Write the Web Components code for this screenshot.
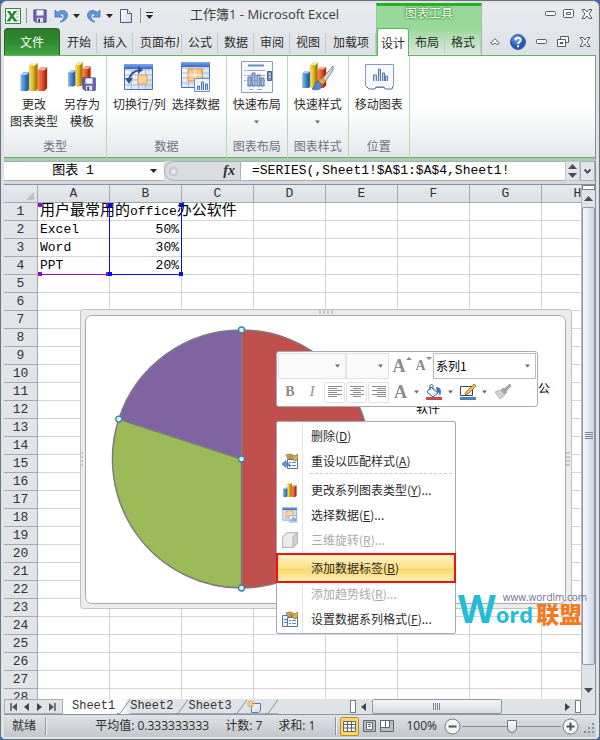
<!DOCTYPE html>
<html lang="zh-CN">
<head>
<meta charset="utf-8">
<title>工作簿1 - Microsoft Excel</title>
<style>
  html, body { height: 100%; margin: 0; }
  body {
    background: #3d6ba5;
    color: #2b2b2b;
    font: 12px/16px "Noto Sans CJK SC", sans-serif;
    --mono: "Liberation Mono", "Noto Sans CJK SC", monospace;
    --edge: #8a9099;
  }
</style>
</head>
<body>
<excel-window>
  <window-header slot="header"></window-header>
  <excel-ribbon slot="ribbon">
    <ribbon-group label="类型">
      <ribbon-button icon="bars">更改<br>图表类型</ribbon-button>
      <ribbon-button icon="barsSave">另存为<br>模板</ribbon-button>
    </ribbon-group>
    <ribbon-group label="数据">
      <ribbon-button icon="swap">切换行/列</ribbon-button>
      <ribbon-button icon="selectData">选择数据</ribbon-button>
    </ribbon-group>
    <ribbon-group label="图表布局">
      <ribbon-button icon="layout" drop>快速布局</ribbon-button>
    </ribbon-group>
    <ribbon-group label="图表样式">
      <ribbon-button icon="styles" drop>快速样式</ribbon-button>
    </ribbon-group>
    <ribbon-group label="位置">
      <ribbon-button icon="moveChart">移动图表</ribbon-button>
    </ribbon-group>
  </excel-ribbon>
  <formula-bar slot="formula"></formula-bar>
  <work-area slot="work">
    <sheet-grid></sheet-grid>
    <pie-chart></pie-chart>
    <mini-toolbar></mini-toolbar>
    <context-menu>
      <menu-item key="D">删除</menu-item>
      <menu-item key="A" icon="reset">重设以匹配样式</menu-item>
      <menu-line dashed></menu-line>
      <menu-item key="Y" icon="bars" more>更改系列图表类型</menu-item>
      <menu-item key="E" icon="selectData" more>选择数据</menu-item>
      <menu-item key="R" icon="cube" more off>三维旋转</menu-item>
      <menu-line></menu-line>
      <menu-item key="B" hot>添加数据标签</menu-item>
      <menu-item key="R" more off>添加趋势线</menu-item>
      <menu-item key="F" icon="format" more>设置数据系列格式</menu-item>
    </context-menu>
    <site-mark slot="over"></site-mark>
  </work-area>
  <sheet-tabs slot="tabs"></sheet-tabs>
  <status-bar slot="status"></status-bar>
</excel-window>

<script>
const grads = `
<defs>
 <linearGradient id="b" x2="1"><stop stop-color="#7fb6e8"/><stop offset="1" stop-color="#2a6cb4"/></linearGradient>
 <linearGradient id="y" x2="1"><stop stop-color="#ffe36a"/><stop offset="1" stop-color="#c99a06"/></linearGradient>
 <linearGradient id="r" x2="1"><stop stop-color="#ff8a5c"/><stop offset="1" stop-color="#cf3a16"/></linearGradient>
 <linearGradient id="h" x2="0" y2="1"><stop stop-color="#7fa8ea"/><stop offset="1" stop-color="#3567c4"/></linearGradient>
 <linearGradient id="p" x2="1" y2="1"><stop stop-color="#fff"/><stop offset="1" stop-color="#ccd9ea"/></linearGradient>
 <radialGradient id="q" cx=".4" cy=".3"><stop stop-color="#79a6ea"/><stop offset="1" stop-color="#2458b4"/></radialGradient>
</defs>`;
const bars = `
 <path d="M2 15l3-3h6v18l-2 2H2z" fill="#2565ab"/><path d="M2 15h6v17H2z" fill="url(#b)"/><path d="M2 15l3-3h6l-3 3z" fill="#a8d2f3"/>
 <path d="M20 10l3-3h7v22l-3 3h-7z" fill="#a82a10"/><path d="M20 10h7v22h-7z" fill="url(#r)"/><path d="M20 10l3-3h7l-3 3z" fill="#ffb08c"/>
 <path d="M11 5l3-3h6v27l-2 3h-7z" fill="#a87f04"/><path d="M11 5h6v27h-6z" fill="url(#y)"/><path d="M11 5l3-3h6l-3 3z" fill="#fff0a0"/>`;
const floppy = `<path d="M1 1h14v14H3l-2-2z" fill="#6c62b4" stroke="#4a4290"/><path d="M4 1.500h8v6H4z" fill="#f2f4fb"/><path d="M4.500 10h7v5h-7z" fill="#e6e6f2"/><path d="M6 11h2v4H6z" fill="#38357a"/>`;
const grid = `<path d="M1.500 3.500h28v25h-28z" fill="url(#p)" stroke="#4a70b4"/><path d="M2 9h27M2 14h27M2 19h27M2 24h27M8.500 9v19M15.500 9v19M22.500 9v19" stroke="#a3bbdc" fill="none"/><path d="M1 3h29v5H1z" fill="url(#h)"/>`;
const miniChart = `<path d="M.5.5h15v13H.5z" fill="#eef4fc" stroke="#6e8fc0"/><path d="M3.500 12V8h2v4M7.500 12V4h2v8M11.500 12V6h2v6" fill="#b9cdea" stroke="#4c74ae"/>`;
const hand = `<path d="M5.500 6.500h10v9h-10z" fill="#f6f9fd" stroke="#5b7396"/><path d="M7 9.500h2M7 12.500h2M10 9.500h4M10 12.500h4" stroke="#5a88c8"/><path d="M4 2l4-1 5 2 3-2v5l-3 2-4-3-3 1z" fill="#d9b254" stroke="#806020" stroke-width=".7"/><path d="M6 3l4 2m-2-3l4 3" stroke="#8c6a22" stroke-width=".7"/>`;
const ICONS = {
 bars: [32, 34, bars],
 barsSave: [32, 34, `<g transform="scale(.84)">${bars}</g><g transform="translate(16 17) scale(.94)">${floppy}</g>`],
 swap: [32, 32, grid + `<path d="M15 14h9v9h-9z" fill="#fbd29a" stroke="#e79a4a"/><path d="M6 19c1-6 4-9 11-10" fill="none" stroke="#2c5592" stroke-width="2"/><path d="M15 5l5 4-5 4zM2 17h8l-4 6z" fill="#2c5592"/>`],
 selectData: [32, 32, `<g transform="translate(0 -2)">${grid}<path d="M8 10h14v12H8z" fill="#fbc98a" stroke="#e88b3a"/><path d="M8 16h14M15 10v12" stroke="#fff"/></g><g transform="translate(14 17)">${miniChart}</g>`],
 layout: [32, 32, `<path d="M.5.5h31v31H.5z" fill="#f7f9fc" stroke="#8b9cb8"/><path d="M7 4.500h16" stroke="#6f8fc8" stroke-width="2"/><path d="M6 9.500h18M6 14.500h18M6 19.500h18M6 24.500h18M3 9.500h2M3 14.500h2M3 19.500h2M8 28.500h4M16 28.500h5" stroke="#9aaac6"/><path d="M7 16h3v9H7zM11 12h3v13h-3zM16 14h3v11h-3zM20 17h3v8h-3z" fill="#a8bde0" stroke="#5774a8"/><path d="M26.500 10.500h4v9h-4z" fill="#7e90b2" stroke="#4c5f86"/><path d="M28 13h2M28 16h2" stroke="#fff"/>`],
 styles: [32, 32, `<g transform="translate(-1 0) scale(.84)">${bars}</g><path d="M31 5L20 18l3 3 8-12z" fill="#d8d8d8" stroke="#6f6f6f" stroke-width=".8"/><path d="M20 17l-4 3 4 4 4-4z" fill="#e7a34a" stroke="#9a6a26" stroke-width=".6"/><path d="M16 20c-4 1-2 5-6 8 5 2 10 0 10-4z" fill="#5784c9" stroke="#2f5594" stroke-width=".7"/>`],
 moveChart: [32, 32, `<path d="M2.500 3.500h28v21l-2 2H4l-1.500-2z" fill="#f6f9fd" stroke="#8b9cb8"/><path d="M3 25l3 3h6l1-2h8l1 2h7l1-3" fill="#f6f9fd" stroke="#5a6e94"/><path d="M10.500 20v-6h3v6M15.500 20V8h2v12M19.500 20v-8h2v8M22.500 20v-5h2v5" fill="#c7d5ec" stroke="#5a79ae"/>`],
 save: [16, 16, floppy],
 excel: [16, 16, `<path d="M.5.5h15v15H.5z" fill="#f6fbf5" stroke="#2f8a3c"/><path d="M11 3h3M11 6h3M11 9h3M11 12h3" stroke="#8cc58f"/><path d="M2 3h3l2 3 2-3h3L8.500 8l4 5.500h-3.500L7 10l-2 3.500H1.500L5.300 8z" fill="#268535"/>`],
 undo: [14, 14, `<path d="M1 1v7h7L5.500 5.500C8 4 10.500 5 10 8c-.3 2-2 4-4 5 4-.5 7.500-3 7.500-7C13.500 1.500 8 0 3.500 3.500z" fill="#5e9bdd" stroke="#2f66b0" stroke-width=".7"/>`],
 redo: [14, 14, `<path d="M13 1v7H6l2.500-2.500C6 4 3.500 5 4 8c.3 2 2 4 4 5C4 12.500.5 10 .5 6 .5 1.500 6 0 10.500 3.500z" fill="#5e9bdd" stroke="#2f66b0" stroke-width=".7"/>`],
 page: [12, 14, `<path d="M.5.5h7l4 4v9H.5z" fill="url(#p)" stroke="#4a5f86"/><path d="M7.500.5v4h4" fill="#fff" stroke="#4a5f86"/>`],
 down: [7, 4, `<path d="M0 0h7L3.500 4z" fill="#222"/>`],
 downGrey: [7, 4, `<path d="M0 0h7L3.500 4z" fill="#666"/>`],
 qat: [7, 7, `<path d="M0 .5h7" stroke="#222"/><path d="M0 3h7L3.500 7z" fill="#222"/>`],
 min: [11, 5, `<rect x=".5" y=".5" width="10" height="4" rx="1" fill="#fff" stroke="#555c66"/>`],
 max: [11, 9, `<rect x=".5" y=".5" width="10" height="8" rx="1" fill="#fff" stroke="#555c66"/><path d="M3.500 3.500h4v2h-4z" fill="none" stroke="#555c66"/>`],
 restore: [12, 11, `<path d="M3.500.5h8v6h-8z" fill="#fff" stroke="#555c66"/><path d="M.5 3.500h8v7h-8z" fill="#fff" stroke="#555c66"/><path d="M3 6.500h3v1H3z" fill="none" stroke="#555c66"/>`],
 close: [12, 10, `<path d="M1 .5h3l2 2.500 2-2.500h3L8 5l3 4.500H8L6 7 4 9.500H1L4 5z" fill="#fff" stroke="#555c66"/>`],
 collapse: [10, 7, `<path d="M5 .7L9.300 5 8 6.300H6.500L5 5 3.500 6.300H2L.7 5z" fill="#fff" stroke="#555c66"/>`],
 help: [16, 16, `<circle cx="8" cy="8" r="7.500" fill="url(#q)" stroke="#3a62a8"/><path d="M5.500 6.300C5.500 3 10.600 3 10.600 6c0 2-2.500 2-2.500 4" fill="none" stroke="#fff" stroke-width="1.900"/><path d="M7.100 11.300h2v2h-2z" fill="#fff"/>`],
 reset: [16, 16, hand + `<path d="M0 11l4-3.500V10c3 0 4 1 4 4-1-1.500-2-2-4-2v2.500z" fill="#5c96e0" stroke="#2f5fae" stroke-width=".6"/>`],
 format: [16, 16, `<path d="M.5 4.500h9v11h-9z" fill="#e9f0fa" stroke="#5b7396"/><path d="M2 8.500h3M2 11.500h3" stroke="#5a88c8"/>` + hand],
 cube: [14, 14, `<path d="M.5 4.500l4-4h9v9l-4 4h-9z" fill="#ececec" stroke="#bcbcbc"/><path d="M9.500 4.500l4-4v9l-4 4z" fill="#cfcfcf" stroke="#bcbcbc"/>`],
 bucket: [16, 14, `<path d="M5 3l7 6-5 4-6-5z" fill="#f4f8ff" stroke="#33558e"/><path d="M4 6V2c0-2 3-2 3 0v3" fill="none" stroke="#33558e"/><path d="M10 3c5 0 6 4 4 9-1-3-1-4-3-4z" fill="#3f6fbd"/>`],
 pen: [16, 14, `<path d="M.5 2.500h12v9H.5z" fill="#fff" stroke="#444"/><path d="M14 0l2 2-8 8-3 1 1-3z" fill="#f2b84b" stroke="#805a1a" stroke-width=".7"/>`],
 brush: [16, 16, `<path d="M15 0l1 2-5 5-2-2zM8 4l4 4-2 2-4-4z" fill="#a8a8a8" stroke="#8b8b8b" stroke-width=".6"/><path d="M5 6l5 5-5 4L0 8z" fill="#d2d2d2" stroke="#9a9a9a" stroke-width=".6"/>`],
 left: [14, 12, `<path d="M0 .5h14M0 2.500h9M0 4.500h14M0 6.500h9M0 8.500h14M0 10.500h9" stroke="#8c8c8c"/>`],
 center: [14, 12, `<path d="M0 .5h14M3 2.500h8M0 4.500h14M3 6.500h8M0 8.500h14M3 10.500h8" stroke="#8c8c8c"/>`],
 right: [14, 12, `<path d="M0 .5h14M5 2.500h9M0 4.500h14M5 6.500h9M0 8.500h14M5 10.500h9" stroke="#8c8c8c"/>`],
 first: [7, 8, `<path d="M1 0v8" stroke="#555" stroke-width="1.500"/><path d="M7 0v8L2 4z" fill="#555"/>`],
 prev: [5, 8, `<path d="M5 0v8L0 4z" fill="#444"/>`],
 next: [5, 8, `<path d="M0 0v8l5-4z" fill="#444"/>`],
 last: [7, 8, `<path d="M6 0v8" stroke="#555" stroke-width="1.500"/><path d="M0 0v8l5-4z" fill="#555"/>`],
 up: [9, 5, `<path d="M0 5h9L4.500 0z" fill="#484c52"/>`],
 dn: [9, 5, `<path d="M0 0h9L4.500 5z" fill="#484c52"/>`],
 chevron: [7, 5, `<path d="M.5.5l3 3 3-3" fill="none" stroke="#484c52" stroke-width="2"/>`],
 slash: [13, 15, `<path d="M0 14.500h3L13 .5" fill="none" stroke="#8a9099"/>`],
 newSheet: [15, 13, `<path d="M4.500 3.500h9v7l-2 2h-7z" fill="url(#p)" stroke="#5b79ad"/><path d="M4 0v8M0 4h8M1 1l6 6M7 1L1 7" stroke="#f0a020"/><circle cx="4" cy="4" r="1.500" fill="#ffe08a"/>`],
 vNormal: [13, 11, `<path d="M.5.5h12v10H.5zM.5 3.500h12M.5 7h12M4.500 .5v10M8.500 .5v10" fill="#fff" stroke="#5f6670"/>`],
 vLayout: [13, 12, `<path d="M.5.5h12v11H.5z" fill="#b9bec6" stroke="#5f6670"/><path d="M3.500 2.500h6v7h-6z" fill="#fff" stroke="#5f6670"/><path d="M5 4.500h3M5 6.500h3" stroke="#5f6670"/>`],
 vBreak: [14, 12, `<path d="M.5.5h13v11H.5z" fill="#b9bec6" stroke="#5f6670"/><path d="M1 1h8v6H1z" fill="#fff"/><path d="M5.500 0v7M9.500 0v7M1 7.500h9" stroke="#5f6670"/>`],
 minus: [17, 17, `<circle cx="8.500" cy="8.500" r="7.500" fill="#f4f5f7" stroke="#70757d"/><path d="M4.500 8.500h8" stroke="#4d525a" stroke-width="2"/>`],
 plus: [17, 17, `<circle cx="8.500" cy="8.500" r="7.500" fill="#f4f5f7" stroke="#70757d"/><path d="M4.500 8.500h8M8.500 4.500v8" stroke="#4d525a" stroke-width="2"/>`],
 grip: [11, 11, `<path d="M8 0h2v2H8zM4 4h2v2H4zM8 4h2v2H8zM0 8h2v2H0zM4 8h2v2H4zM8 8h2v2H8z" fill="#8b9098"/>`],
};

const reset = `
  :host, *, *::before, *::after { box-sizing: border-box; }
  button { font: inherit; color: inherit; background: none; border: 0; padding: 0; margin: 0; white-space: nowrap; }
  input, select { font: inherit; color: inherit; border: 0; margin: 0; padding: 0; background: none; outline: 0; border-radius: 0; }`;
function element(name, css, html) {
  customElements.define(name, class extends HTMLElement {
    constructor() {
      super();
      const root = this.attachShadow({ mode: 'open' });
      const body = typeof html === 'function' ? html(this) : html;
      root.innerHTML = `<style>${reset}${css}</style>${body}`;
    }
  });
}
const icon = (name, w, h) => `<x-icon name="${name}"${w ? ` w="${w}" h="${h}"` : ''}></x-icon>`;
const btn = (name, label, cls = '', w, h) => `<button class="${cls}" aria-label="${label}">${icon(name, w, h)}</button>`;

element('x-icon', `:host { display: inline-flex; flex: none; } svg { display: block; }`, el => {
  const [w, h, art] = ICONS[el.getAttribute('name')];
  return `<svg width="${el.getAttribute('w') || w}" height="${el.getAttribute('h') || h}" viewBox="0 0 ${w} ${h}" aria-hidden="true">${art.includes('url(') ? grads : ''}${art}</svg>`;
});

element('excel-window', `
  :host { display: flex; flex-direction: column; height: 100vh; padding: 2px 3px 2px 3px;
    border: 1px solid #6c727c; border-radius: 7px 7px 5px 5px; background: #dfe3e8; overflow: hidden; }
  slot[name=work]::slotted(*) { flex: 1; min-height: 0; }`,
  `<slot name="header"></slot><slot name="ribbon"></slot><slot name="formula"></slot><slot name="work"></slot><slot name="tabs"></slot><slot name="status"></slot>`);

element('window-header', `
  :host { display: grid; grid-template-columns: auto auto 1fr; grid-template-rows: 25px 27px; flex: none;
    background: linear-gradient(#e9ebee, #dde1e6); border-bottom: 1px solid #5cb85c; }
  .quick { display: flex; align-items: center; padding-left: 1px; }
  .quick button { display: flex; }
  .quick .near { margin-left: 5px; }
  .quick .far { margin-left: 7px; }
  .bar { width: 1px; height: 15px; background: #8a9099; margin: 0 6px 0 5px; }
  .bar.end { margin: 0 5px 0 8px; }
  .title { flex: 1; text-align: center; font: 13px/16px "Open Sans", "Noto Sans CJK SC", sans-serif; color: #3a3a3a; padding: 0 0 3px; }
  .tool { text-align: center; color: #fff; border-top: 3px solid #27ad27; border-left: 1px solid #8ccf8c; border-right: 1px solid #8ccf8c;
    background: #98d898; line-height: 13px; text-shadow: 0 0 2px #1c7a1c, 0 0 2px #1c7a1c; }
  .win, .doc { display: flex; align-items: center; justify-content: flex-end; gap: 7px; padding: 0 3px 4px 0; }
  .doc { gap: 10px; padding: 0 5px 0 0; }
  .win button, .doc button { display: flex; }
  .tabs { display: flex; align-items: stretch; }
  .tabs button { width: 36px; position: relative; overflow: hidden; }
  .tabs button::after { content: ""; position: absolute; right: 0; top: 5px; bottom: 2px; width: 1px; background: #c3c8ce; }
  .tabs .file { width: 56px; margin-right: 1px; color: #fff; border-radius: 4px 4px 0 0; border: 1px solid #1f6b22; border-bottom: 0;
    background: linear-gradient(#2c7a2c, #2f8a30 50%, #45a846); }
  .tabs .file::after, .context .on::after { display: none; }
  .tabs .cut { width: 49px; padding-left: 7px; text-align: left; }
  .tabs .cut span { display: block; width: 39px; overflow: hidden; }
  .tabs .wide { width: 50px; }
  .context { border-left: 1px solid #8ccf8c; border-right: 1px solid #8ccf8c; background: linear-gradient(#98d898, #dfe8e2); }
  .context .on { width: 32px; background: #fff; border: 1px solid #5cb85c; border-bottom: 0; border-radius: 3px 3px 0 0; margin-bottom: -1px; }`,
  `<div class="quick">${btn('excel', 'Excel')}<span class="bar"></span>${btn('save', '保存', '', 14, 14)}
     ${btn('undo', '撤消', 'far')}${btn('down', '撤消列表', 'near')}${btn('redo', '恢复', 'far')}${btn('down', '恢复列表', 'near')}
     ${btn('page', '新建', 'far')}<span class="bar end"></span>${btn('qat', '自定义快速访问工具栏')}
     <span class="title">工作簿1 - Microsoft Excel</span></div>
   <div class="tool">图表工具</div>
   <div class="win">${btn('min', '最小化')}${btn('max', '最大化')}${btn('close', '关闭')}</div>
   <div class="tabs"><button class="file">文件</button><button>开始</button><button>插入</button><button class="cut"><span>页面布局</span></button><button>公式</button><button>数据</button><button>审阅</button><button>视图</button><button class="wide">加载项</button></div>
   <div class="tabs context"><button class="on">设计</button><button>布局</button><button>格式</button></div>
   <div class="doc">${btn('collapse', '功能区最小化')}${btn('help', '帮助')}${btn('min', '最小化工作簿')}${btn('restore', '还原工作簿')}${btn('close', '关闭工作簿')}</div>`);

element('excel-ribbon', `
  :host { display: flex; flex: none; height: 105px; background: linear-gradient(#fff 50%, #e4e7eb);
    border-right: 1px solid var(--edge); border-bottom: 3px solid #a5cfa8; box-shadow: inset 0 -1px #6fa574; }`,
  `<slot></slot>`);
element('ribbon-group', `
  :host { display: flex; flex-direction: column; border-right: 1px solid #b4d9b6; padding: 0 3px; }
  .row { display: flex; flex: 1; justify-content: center; }
  .label { color: #6c7380; text-align: center; height: 20px; line-height: 16px; }`,
  el => `<div class="row"><slot></slot></div><div class="label">${el.getAttribute('label')}</div>`);
element('ribbon-button', `
  :host { display: flex; }
  button { display: flex; flex-direction: column; align-items: center; padding: 5px 3px 0; line-height: 17px; }
  x-icon { margin-bottom: 1px; height: 33px; }
  .d { height: 4px; margin: 8px 0 0; }`,
  el => `<button>${icon(el.getAttribute('icon'), 32, 32)}<span><slot></slot></span>${el.hasAttribute('drop') ? '<x-icon class="d" name="downGrey" w="5" h="4"></x-icon>' : ''}</button>`);

element('formula-bar', `
  :host { display: flex; flex: none; height: 24px; padding: 0 0 3px; background: #d6dae0; border-bottom: 1px solid var(--edge); border-right: 1px solid var(--edge); }
  button { display: flex; align-items: center; justify-content: center; }
  .name { display: flex; width: 160px; background: #fff; border: 1px solid #a9afb7; border-width: 1px 0; }
  .name input { flex: 1; min-width: 0; text-align: center; font: 13px/18px var(--mono); color: #000; }
  .name button { width: 22px; }
  .fx { display: flex; justify-content: space-between; align-items: center; width: 77px; padding: 0 5px 0 4px; background: #d9dde2;
    border: 1px solid #a9afb7; border-radius: 10px 0 0 10px; font: italic bold 14px/16px "Liberation Serif", serif; }
  .fx i { width: 9px; height: 9px; border-radius: 50%; background: radial-gradient(#f4f5f6, #a4aab2); }
  .formula { flex: 1; min-width: 0; background: #fff; border: 1px solid #a9afb7; border-width: 1px 0; padding-left: 11px; font: 13px/18px var(--mono); color: #000; }
  .spin { flex-direction: column; gap: 4px; width: 15px; border: 1px solid #c3c8ce; background: #e2e5ea; }
  .more { width: 15px; background: #e2e5ea; border: 1px solid #a9afb7; }`,
  `<div class="name"><input aria-label="名称框" value="图表 1"><button aria-label="名称列表">${icon('down')}</button></div>
   <div class="fx"><i></i><button aria-label="插入函数">fx</button></div>
   <input class="formula" aria-label="编辑栏" value="=SERIES(,Sheet1!$A$1:$A$4,Sheet1!">
   <button class="spin" aria-label="滚动编辑栏">${icon('up')}${icon('dn')}</button><button class="more" aria-label="展开编辑栏">${icon('chevron')}</button>`);

element('work-area', `
  :host { position: relative; display: flex; border-right: 1px solid var(--edge); background: #dfe3e8; }
  .sheet { position: relative; flex: 1; min-width: 0; overflow: hidden; background: #fff; }
  .scroll { display: flex; flex-direction: column; align-items: center; width: 14px; background: #dfe3e8; border-left: 1px solid #b5bac1; padding-bottom: 6px; gap: 6px; }
  .scroll button { display: flex; }
  .split { width: 13px; height: 5px; border: 1px solid #777d86; background: #fff; }
  .thumb { flex: 1; width: 13px; margin-bottom: 17px; border: 1px solid #8f98a5; border-radius: 2px; background: linear-gradient(90deg, #f4f6fb, #dfe4f0 60%, #ccd3e2);
    display: flex; align-items: center; justify-content: center; }
  .thumb i { width: 8px; height: 8px; background: repeating-linear-gradient(#7d8591 0 1px, transparent 1px 2px); }`,
  `<div class="sheet"><slot></slot></div>
   <div class="scroll"><span class="split"></span><button aria-label="向上滚动">${icon('up')}</button><div class="thumb"><i></i></div><button aria-label="向下滚动">${icon('dn')}</button></div>
   <slot name="over"></slot>`);

const cells = { 2: ['Excel', '50%'], 3: ['Word', '30%'], 4: ['PPT', '20%'] };
let rows = '';
for (let r = 1; r <= 28; r++) {
  const c = cells[r] || ['', ''];
  const a = r === 1 ? '<span class="cn">用户最常用的</span>office<span class="cn">办公软件</span>' : c[0];
  rows += `<tr><th scope="row">${r}</th><td>${a}</td><td class="n">${c[1]}</td>${'<td></td>'.repeat(6)}</tr>`;
}
element('sheet-grid', `
  :host { display: block; font: 13px/17px var(--mono); color: #000; }
  table { table-layout: fixed; width: 610px; border-spacing: 0; }
  th, td { height: 18px; padding: 0; border-right: 1px solid #d2d4d7; border-bottom: 1px solid #d2d4d7; white-space: nowrap; overflow: visible; }
  td { padding: 0 2px; }
  th { font-weight: normal; background: #e1e5ea; color: #333; border-color: #a3a9b1; }
  thead th { background: linear-gradient(#e6e9ed, #dce0e5); }
  .n { text-align: right; }
  .cn { font-size: 15px; line-height: 17px; vertical-align: top; }
  .corner { text-align: right; }
  .corner i { display: block; width: 8px; margin: 4px 3px 0 auto; border: 4px solid; border-color: transparent #bcc2ca #bcc2ca transparent; }
  col { width: 72px; } col:first-child { width: 34px; }
  .range { position: absolute; top: 18px; height: 72px; }
  .range i { position: absolute; width: 4px; height: 4px; background: currentColor; }
  .a { left: 34px; width: 72px; color: #8b12b8; border-bottom: 1px solid; }
  .b { left: 105px; width: 73px; color: #0c0cf0; border: 1px solid; border-top: 0; }
  .a i:nth-child(odd) { left: 0; } .a i:nth-child(even) { right: 0; }
  .b i:nth-child(odd) { left: -2px; } .b i:nth-child(even) { right: -2px; }
  .range i:nth-child(n+3) { bottom: -2px; }`,
  `<table><colgroup>${'<col>'.repeat(9)}</colgroup><thead><tr><th class="corner"><i></i></th>${[...'ABCDEFGH'].map(c => `<th scope="col">${c}</th>`).join('')}</tr></thead><tbody>${rows}</tbody></table>
   <div class="range a"><i></i><i></i><i></i><i></i></div><div class="range b"><i></i><i></i><i></i><i></i></div>`);

element('pie-chart', `
  :host { position: absolute; left: 76px; top: 124px; width: 492px; height: 300px; }
  svg { display: block; width: 100%; height: 100%; }
  p { position: absolute; right: 22px; top: 71px; margin: 0; color: #000; }
  p + p { right: auto; left: 336px; top: 91px; }`,
  `<svg viewBox="80 309 492 300" role="img" aria-label="饼图">
    <rect x="80.500" y="309.500" width="491" height="299" rx="3" fill="#ececec" stroke="#c2c2c2"/>
    <rect x="85.500" y="315.500" width="480" height="288" rx="6" fill="#fff" stroke="#a9a9a9"/>
    <path d="M319 311h15M319 313h15M319 606h15M82 452v15M569 452v15M567 452v15" stroke="#a0a0a0" stroke-dasharray="2 2"/>
    <g stroke="#7c7c7c" stroke-width="1.500">
     <path d="M241.500 459V330a129 129 0 0 1 0 258z" fill="#c0504d"/>
     <path d="M241.500 459v129A129 129 0 0 1 118.800 419.100z" fill="#9bbb59"/>
     <path d="M241.500 459L118.800 419.100A129 129 0 0 1 241.500 330z" fill="#8064a2"/></g>
    <g fill="#d5effb" stroke="#3f7f9c" stroke-width="1.300"><circle cx="241.500" cy="330" r="3"/><circle cx="241.500" cy="459" r="3"/><circle cx="241.500" cy="588" r="3"/><circle cx="118.800" cy="419.100" r="3"/></g>
   </svg><p>公</p><p>软件</p>`);

element('mini-toolbar', `
  :host { position: absolute; left: 272px; top: 166px; width: 262px; padding: 1px; background: #fff; border: 1px solid #a7abb0; border-radius: 3px; color: #8c8c8c; }
  .row { display: flex; align-items: center; height: 26px; }
  .row button { display: flex; align-items: center; justify-content: center; }
  .box { position: relative; display: flex; align-items: center; height: 26px; border: 1px solid #e0e2e6; background: #fafafb; }
  .box x-icon { position: absolute; right: 5px; pointer-events: none; }
  select { appearance: none; width: 100%; height: 100%; padding-left: 2px; }
  .f { width: 68px; } .s { width: 43px; } .e { width: 103px; background: #fff; border-color: #b9bdc3; color: #000; margin-left: auto; }
  .big, .small, .col { font: bold 18px/22px "Liberation Serif", serif; }
  .big { width: 22px; margin-left: 2px; } .small { width: 15px; font-size: 14px; margin-left: 3px; } .col { width: 17px; margin-left: 3px; }
  .big::after, .small::after { content: ""; align-self: flex-start; margin-top: 2px; border: 3px solid transparent; border-bottom-color: #8c8c8c; border-top: 0; }
  .small::after { border-bottom: 0; border-top: 3px solid #8c8c8c; }
  .b, .i { width: 22px; font: bold 14px/20px "Liberation Serif", serif; } .i { font-style: italic; font-weight: normal; }
  .al { width: 21px; height: 21px; border: 1px solid #e0e2e6; border-radius: 2px; margin-left: 1px; }
  .second { padding: 0 0 0 1px; }
  .dd { width: 10px; margin-left: 2px; }
  .ink { flex-direction: column; width: 18px; margin-left: 4px; }
  .ink i { width: 16px; height: 3px; background: var(--ink); margin-top: -1px; }
  .paint { margin-left: 6px; }`,
  `<div class="row"><div class="box f"><select aria-label="字体"></select>${icon('downGrey', 5, 4)}</div><div class="box s"><select aria-label="字号"></select>${icon('downGrey', 5, 4)}</div>
    <button class="big" aria-label="增大字号">A</button><button class="small" aria-label="减小字号">A</button>
    <div class="box e"><select aria-label="图表元素"><option>系列1</option></select>${icon('downGrey', 5, 4)}</div></div>
   <div class="row second"><button class="b">B</button><button class="i">I</button>${btn('left', '左对齐', 'al')}${btn('center', '居中', 'al')}${btn('right', '右对齐', 'al')}
    <button class="col" aria-label="字体颜色">A</button><button class="dd" aria-label="颜色列表">${icon('downGrey', 5, 4)}</button>
    <button class="ink" style="--ink:#c0504d" aria-label="形状填充">${icon('bucket')}<i></i></button><button class="dd" aria-label="填充列表">${icon('downGrey', 5, 4)}</button>
    <button class="ink" style="--ink:#4f81bd" aria-label="形状轮廓">${icon('pen')}<i></i></button><button class="dd" aria-label="轮廓列表">${icon('downGrey', 5, 4)}</button>
    ${btn('brush', '格式刷', 'paint')}</div>`);

element('context-menu', `
  :host { position: absolute; left: 272px; top: 236px; width: 180px; padding: 1px 0 2px; border: 1px solid #a7abb0; border-radius: 2px;
    background: linear-gradient(90deg, #fff 25px, #e3e5e8 25px 26px, #fff 26px); }`, `<slot></slot>`);
element('menu-line', `:host { display: block; height: 4px; margin-left: 33px; } :host([dashed]) { border-top: 1px dashed #c8cbd0; margin-right: 3px; }`, ``);
element('menu-item', `
  :host { display: block; }
  button { display: flex; align-items: center; width: 100%; height: 25px; text-align: left; }
  .i { width: 34px; display: flex; padding-left: 5px; }
  :host([off]) { color: #a9a9a9; }
  :host([hot]) button { height: 30px; margin: -3px 0 -2px -1px; width: 180px; border: 2px solid #f01010; padding-right: 2px;
    background: linear-gradient(#fdf3c4, #fbe08a 50%, #f8d668 55%, #fdf0b8); }
  :host([hot]) .i { width: 33px; }`,
  el => `<button${el.hasAttribute('off') ? ' disabled' : ''}><span class="i">${el.getAttribute('icon') ? icon(el.getAttribute('icon'), 16, 16) : ''}</span><span><slot></slot>(<u>${el.getAttribute('key')}</u>)${el.hasAttribute('more') ? '...' : ''}</span></button>`);

element('site-mark', `
  :host { position: absolute; left: 454px; top: 406px; width: 132px; font-family: "Open Sans", sans-serif; font-weight: bold; white-space: nowrap; }
  .url { display: block; text-align: right; padding-right: 3px; font: 10px/12px "Open Sans", sans-serif; color: #6b7196; }
  .name { display: flex; align-items: baseline; line-height: 28px; color: #26bcd6; margin-top: -9px; }
  .w { font-size: 39px; } .o { font-size: 22px; }
  .c { font: 900 23px/28px "Noto Sans CJK SC", sans-serif; color: #f47a20; margin-left: 3px; }`,
  `<span class="url">www.wordlm.com</span><span class="name"><span class="w">W</span><span class="o">ord</span><span class="c">联盟</span></span>`);

element('sheet-tabs', `
  :host { display: flex; flex: none; height: 15px; background: #dfe3e8; border-right: 1px solid var(--edge); font: 12px/14px var(--mono); color: #333; }
  button { display: flex; align-items: center; }
  .nav { display: flex; justify-content: space-between; width: 59px; padding: 0 6px 0 5px; border: 1px solid #a9afb7; }
  .tabs { display: flex; }
  .tabs button { height: 15px; border-bottom: 1px solid #a9afb7; }
  .tabs .on { background: linear-gradient(90deg, #fff calc(100% - 8px), transparent); padding-left: 9px; border-color: transparent; }
  .tabs span { margin-right: 2px; }
  .new { gap: 3px; }
  .scroll { display: flex; align-items: center; width: 231px; margin-left: auto; margin-right: 14px; }
  .split { width: 6px; height: 13px; border: 1px solid #777d86; background: #fff; }
  .thumb { width: 130px; height: 15px; margin: 0 auto 0 6px; border: 1px solid #8f98a5; border-radius: 2px; background: linear-gradient(#f5f6f9, #d6dae3); display: flex; align-items: center; justify-content: center; }
  .thumb i { width: 8px; height: 7px; background: repeating-linear-gradient(90deg, #7d8591 0 1px, transparent 1px 2px); }
  .l { margin-left: 5px; } .r { margin-right: 5px; }`,
  `<div class="nav">${btn('first', '第一张')}${btn('prev', '上一张')}${btn('next', '下一张')}${btn('last', '最后一张')}</div>
   <div class="tabs"><button class="on"><span>Sheet1</span>${icon('slash')}</button><button><span>Sheet2</span>${icon('slash')}</button><button><span>Sheet3</span>${icon('slash')}</button><button class="new" aria-label="插入工作表">${icon('newSheet')}${icon('slash')}</button></div>
   <div class="scroll"><span class="split"></span>${btn('prev', '向左滚动', 'l')}<div class="thumb"><i></i></div>${btn('next', '向右滚动', 'r')}<span class="split"></span></div>`);

element('status-bar', `
  :host { display: flex; flex: none; align-items: center; height: 23px; padding-left: 8px; border-top: 1px solid #8f959d; background: linear-gradient(#dfe2e6, #c3c7cd);
    font-family: "Open Sans", "Noto Sans CJK SC", sans-serif; }
  button { display: flex; align-items: center; justify-content: center; }
  .line { width: 1px; height: 18px; background: #8f959d; box-shadow: 1px 0 #eef0f2; }
  .sums { display: flex; flex: 1; justify-content: flex-end; gap: 16px; padding-right: 20px; }
  .ready { margin-right: 9px; }
  .view { margin-left: 4px; }
  .on { width: 19px; height: 19px; border: 1px solid #c88a1e; border-radius: 2px; background: #fbd76a; }
  .pct { margin: 0 7px 0 12px; }
  input { appearance: none; width: 99px; height: 16px; background: linear-gradient(#858b94, #858b94) center / 100% 1px no-repeat; margin: 0 1px; }
  input::-webkit-slider-thumb { appearance: none; width: 10px; height: 13px; background: linear-gradient(#fff, #d5d8dd); border: 1px solid #6d737c; border-radius: 1px 1px 5px 5px; }
  .grip { align-self: flex-end; margin: 0 1px 3px 5px; }`,
  `<span class="ready">就绪</span><span class="line"></span>
   <div class="sums"><span>平均值: 0.333333333</span><span>计数: 7</span><span>求和: 1</span></div><span class="line"></span>
   ${btn('vNormal', '普通', 'view on')}${btn('vLayout', '页面布局', 'view')}${btn('vBreak', '分页预览', 'view')}
   <span class="pct">100%</span>${btn('minus', '缩小')}<input type="range" min="0" max="100" value="50" aria-label="显示比例">${btn('plus', '放大')}<x-icon class="grip" name="grip"></x-icon>`);
</script>
</body>
</html>
